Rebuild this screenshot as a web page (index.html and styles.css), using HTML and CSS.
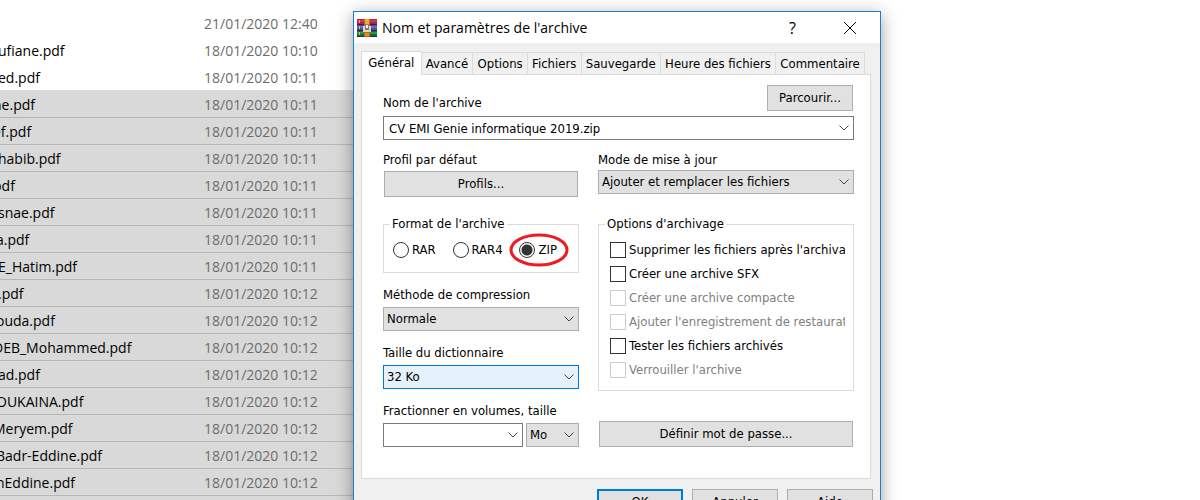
FILE: index.html
```html
<!DOCTYPE html>
<html lang="fr">
<head>
<meta charset="utf-8">
<title>Nom et paramètres de l'archive</title>
<link rel="stylesheet" href="styles.css">
</head>
<body>
<main class="desktop">
  <table class="files">
    <tbody>
      <tr><td class="name"></td><td class="date">21/01/2020 12:40</td></tr>
      <tr><td class="name">ufiane.pdf</td><td class="date">18/01/2020 10:10</td></tr>
      <tr><td class="name">ed.pdf</td><td class="date">18/01/2020 10:11</td></tr>
      <tr class="selected"><td class="name cut-more">ne.pdf</td><td class="date">18/01/2020 10:11</td></tr>
      <tr class="selected"><td class="name cut-more">ef.pdf</td><td class="date">18/01/2020 10:11</td></tr>
      <tr class="selected"><td class="name">habib.pdf</td><td class="date">18/01/2020 10:11</td></tr>
      <tr class="selected"><td class="name cut-more">pdf</td><td class="date">18/01/2020 10:11</td></tr>
      <tr class="selected"><td class="name">snae.pdf</td><td class="date">18/01/2020 10:11</td></tr>
      <tr class="selected"><td class="name cut">a.pdf</td><td class="date">18/01/2020 10:11</td></tr>
      <tr class="selected"><td class="name">E_Hatim.pdf</td><td class="date">18/01/2020 10:11</td></tr>
      <tr class="selected"><td class="name">.pdf</td><td class="date">18/01/2020 10:12</td></tr>
      <tr class="selected"><td class="name cut">ouda.pdf</td><td class="date">18/01/2020 10:12</td></tr>
      <tr class="selected"><td class="name cut-more">DEB_Mohammed.pdf</td><td class="date">18/01/2020 10:12</td></tr>
      <tr class="selected"><td class="name">ad.pdf</td><td class="date">18/01/2020 10:12</td></tr>
      <tr class="selected"><td class="name cut">OUKAINA.pdf</td><td class="date">18/01/2020 10:12</td></tr>
      <tr class="selected"><td class="name cut-more">Meryem.pdf</td><td class="date">18/01/2020 10:12</td></tr>
      <tr class="selected"><td class="name cut">Badr-Eddine.pdf</td><td class="date">18/01/2020 10:12</td></tr>
      <tr class="selected"><td class="name cut">nEddine.pdf</td><td class="date">18/01/2020 10:12</td></tr>
      <tr class="selected"><td class="name"></td><td class="date"></td></tr>
    </tbody>
  </table>

  <section class="dialog" role="dialog" aria-labelledby="dialog-title">
    <header class="titlebar">
      <svg class="app-icon" width="20" height="18" viewBox="0 0 20 18" aria-hidden="true">
        <rect width="20" height="6" fill="#a8244c"/><rect y="1" width="20" height="2" fill="#d8305c"/>
        <rect y="6" width="20" height="6" fill="#4a4aa8"/><rect y="7" width="20" height="2" fill="#6868d0"/>
        <rect y="12" width="20" height="6" fill="#146c34"/><rect y="13" width="20" height="2" fill="#209c50"/>
        <path d="M0 5.5h20M0 11.5h20M0 17.5h20" stroke="#382430"/>
        <path d="M2.500 1v3M2.500 7v3M2.500 13v3" stroke="#f0c030"/>
        <rect x="7" width="6" height="18" fill="#b86818"/><rect x="8" width="4" height="5" fill="#f0a838"/>
        <path d="M6 7h2v4h4V7h2v6H6z" fill="#d8d8d8"/><rect x="8" y="5" width="4" height="5" fill="#a07850"/>
        <rect x="9" y="6" width="2" height="3" fill="#fff"/><rect x="8" y="14" width="4" height="3" fill="#e09020"/>
      </svg>
      <h1 class="title" id="dialog-title">Nom et paramètres de l'archive</h1>
      <button class="caption-button" type="button" aria-label="Aide contextuelle">?</button>
      <button class="caption-button close" type="button" aria-label="Fermer">
        <svg width="14" height="14" viewBox="0 0 14 14"><path d="M1 1l12 12M13 1L1 13" stroke="#000"/></svg>
      </button>
    </header>

    <nav class="tabs" role="tablist">
      <button class="tab active" type="button" role="tab" aria-selected="true">Général</button>
      <button class="tab" type="button" role="tab">Avancé</button>
      <button class="tab" type="button" role="tab">Options</button>
      <button class="tab" type="button" role="tab">Fichiers</button>
      <button class="tab" type="button" role="tab">Sauvegarde</button>
      <button class="tab" type="button" role="tab">Heure des fichiers</button>
      <button class="tab" type="button" role="tab">Commentaire</button>
    </nav>

    <form class="panel">
      <div class="name-row">
        <label for="archive">Nom de l'archive</label>
        <button class="button browse" type="button">Parcourir...</button>
      </div>
      <div class="combo">
        <input class="combo-input" id="archive" type="text" value="CV EMI Genie informatique 2019.zip">
        <svg class="chevron" width="10" height="6" viewBox="0 0 10 6"><path d="M.5.5L5 5 9.500.5"/></svg>
      </div>

      <div class="columns">
        <div class="column">
          <div class="field">
            <label for="profiles">Profil par défaut</label>
            <button class="button inset" id="profiles" type="button">Profils...</button>
          </div>
          <fieldset class="group formats">
            <legend>Format de l'archive</legend>
            <div class="radios">
              <label class="option"><input class="radio" type="radio" name="format">RAR</label>
              <label class="option"><input class="radio" type="radio" name="format">RAR4</label>
              <label class="option marked"><input class="radio" type="radio" name="format" checked>ZIP
                <svg class="mark" width="60" height="34" viewBox="0 0 60 34" aria-hidden="true"><ellipse cx="30" cy="17" rx="28" ry="15"/></svg>
              </label>
            </div>
          </fieldset>
          <div class="field stacked">
            <label for="method">Méthode de compression</label>
            <div class="combo"><select class="select" id="method"><option>Normale</option></select><svg class="chevron" width="10" height="6" viewBox="0 0 10 6"><path d="M.5.5L5 5 9.500.5"/></svg></div>
          </div>
          <div class="field stacked">
            <label for="dictionary">Taille du dictionnaire</label>
            <div class="combo"><select class="select focused" id="dictionary"><option>32 Ko</option></select><svg class="chevron" width="10" height="6" viewBox="0 0 10 6"><path d="M.5.5L5 5 9.500.5"/></svg></div>
          </div>
          <div class="field stacked">
            <label for="volume">Fractionner en volumes, taille</label>
            <div class="volume">
              <div class="combo size"><input class="combo-input" id="volume" type="text"><svg class="chevron" width="10" height="6" viewBox="0 0 10 6"><path d="M.5.5L5 5 9.500.5"/></svg></div>
              <div class="combo unit"><select class="select" aria-label="Unité"><option>Mo</option></select><svg class="chevron" width="10" height="6" viewBox="0 0 10 6"><path d="M.5.5L5 5 9.500.5"/></svg></div>
            </div>
          </div>
        </div>

        <div class="column">
          <div class="field update">
            <label for="update">Mode de mise à jour</label>
            <div class="combo"><select class="select" id="update"><option>Ajouter et remplacer les fichiers</option></select><svg class="chevron" width="10" height="6" viewBox="0 0 10 6"><path d="M.5.5L5 5 9.500.5"/></svg></div>
          </div>
          <fieldset class="group options">
            <legend>Options d'archivage</legend>
            <div class="checks">
              <label class="option"><input class="check" type="checkbox">Supprimer les fichiers après l'archivage</label>
              <label class="option"><input class="check" type="checkbox">Créer une archive SFX</label>
              <label class="option off"><input class="check" type="checkbox" disabled>Créer une archive compacte</label>
              <label class="option off"><input class="check" type="checkbox" disabled>Ajouter l'enregistrement de restauration</label>
              <label class="option"><input class="check" type="checkbox">Tester les fichiers archivés</label>
              <label class="option off"><input class="check" type="checkbox" disabled>Verrouiller l'archive</label>
            </div>
          </fieldset>
          <button class="button inset password" type="button">Définir mot de passe...</button>
        </div>
      </div>
    </form>

    <footer class="actions">
      <button class="button default" type="button">OK</button>
      <button class="button" type="button">Annuler</button>
      <button class="button" type="button">Aide</button>
    </footer>
  </section>
</main>
</body>
</html>
```
FILE: styles.css
```css
* {
  box-sizing: border-box;
}

body {
  margin: 0;
  background: #fff;
  color: #000;
  font: 13px/16px "DejaVu Sans Condensed", "DejaVu Sans", sans-serif;
  font-stretch: condensed;
}

button, input, select {
  margin: 0;
  font: inherit;
  color: inherit;
}

.desktop {
  position: relative;
  height: 100vh;
  overflow: hidden;
}

/* File list behind the dialog */
.files {
  width: 400px;
  margin-top: 9px;
  border-collapse: collapse;
  table-layout: fixed;
  font: 14px/20px "Open Sans", "Noto Sans", sans-serif;
}

.files tr {
  height: 27px;
}

.files td {
  padding: 2px 0 0;
  white-space: nowrap;
}

.files .name {
  width: 204px;
  text-indent: -2px;
}

.files .cut {
  text-indent: -4px;
}

.files .cut-more {
  text-indent: -7px;
}

.files .date {
  color: #6d6d6d;
}

.files .selected {
  background: #d9d9d9;
}

.selected + .selected td {
  box-shadow: inset 0 1px #b8b8b8;
}

/* Dialog window */
.dialog {
  position: absolute;
  top: 11px;
  left: 353px;
  width: 528px;
  border: 1px solid #1a7fd0;
  background: #f0f0f0;
  box-shadow: 0 4px 16px rgba(0, 0, 0, .4);
}

.titlebar {
  display: flex;
  align-items: center;
  height: 31px;
  padding-left: 3px;
  background: #fff;
}

.title {
  flex: 1;
  margin: 0 0 0 5px;
  font: 14px/20px "Open Sans", "Noto Sans", sans-serif;
}

.caption-button {
  display: flex;
  align-items: center;
  justify-content: center;
  width: 57px;
  height: 30px;
  padding: 0;
  border: 0;
  background: none;
  font: 16px/20px "Open Sans", "Noto Sans", sans-serif;
}

.close {
  margin-right: 2px;
}

/* Tabs */
.tabs {
  display: flex;
  align-items: flex-end;
  margin: 8px 15px 0 7px;
}

.tab {
  flex: 1 0 auto;
  height: 22px;
  padding: 0 3px;
  border: 1px solid #dcdcdc;
  border-width: 1px 1px 0 0;
  background: #f0f0f0;
  text-align: center;
}

.tab.active {
  z-index: 1;
  height: 24px;
  margin-bottom: -1px;
  padding: 0 5px 2px;
  border-left-width: 1px;
  background: #fff;
}

.panel {
  margin: 0 9px 0 7px;
  padding: 10px 16px 31px 21px;
  border: 1px solid #dcdcdc;
  background: #fff;
}

.name-row {
  display: flex;
  align-items: flex-end;
  justify-content: space-between;
  margin-bottom: 5px;
}

.button {
  height: 26px;
  padding: 0;
  border: 1px solid #adadad;
  background: #e1e1e1;
  text-align: center;
}

.browse {
  width: 86px;
  margin-right: 1px;
}

.inset {
  margin: 0 1px;
}

/* Drop-downs and text boxes */
.combo {
  position: relative;
}

.combo-input,
.select {
  display: block;
  width: 100%;
  height: 24px;
  padding: 0 20px 0 5px;
  border: 1px solid #7a7a7a;
  border-radius: 0;
  outline: 0;
  background: #fff;
}

.select {
  appearance: none;
  padding-left: 3px;
  border-color: #adadad;
  background: #e1e1e1;
}

.select.focused {
  border-color: #0078d7;
  background: #e5f1fb;
}

.chevron {
  position: absolute;
  top: 9px;
  right: 5px;
  fill: none;
  stroke: #444;
  pointer-events: none;
}

/* Two-column form */
.columns {
  display: grid;
  grid-template-columns: 196fr 256fr;
  gap: 19px;
  margin-top: 12px;
}

.column {
  display: flex;
  flex-direction: column;
  min-width: 0;
}

.field {
  display: flex;
  flex-direction: column;
  gap: 3px;
}

.update {
  gap: 2px;
}

.stacked {
  gap: 4px;
  margin-top: 14px;
}

.group {
  min-width: 0;
  margin: 19px 0 0;
  border: 1px solid #dcdcdc;
}

.group legend {
  padding: 0 2px;
  white-space: nowrap;
}

.formats {
  padding: 10px 9px 14px;
}

.formats legend {
  margin-left: -3px;
}

.radios {
  display: flex;
  justify-content: space-between;
  padding-right: 12px;
}

.option {
  display: flex;
  align-items: center;
  gap: 3px;
  height: 16px;
  white-space: nowrap;
}

.off {
  color: #808080;
}

.radio,
.check {
  flex: none;
  appearance: none;
  width: 16px;
  height: 16px;
  border: 1px solid #333;
  background: #fff;
}

.radio {
  border-radius: 50%;
}

.radio:checked {
  background: radial-gradient(circle, #333 5px, #fff 6px);
}

.check:disabled {
  border-color: #ccc;
}

.marked {
  position: relative;
}

.mark {
  position: absolute;
  top: -9px;
  left: -10px;
  fill: none;
  stroke: #ed1c24;
  stroke-width: 3;
}

.options {
  margin-top: 22px;
  padding: 10px 8px 12px 11px;
}

.options legend {
  margin-left: -5px;
}

.checks {
  display: flex;
  flex-direction: column;
  gap: 8px;
  overflow: hidden;
}

.volume {
  display: flex;
  gap: 3px;
}

.size {
  flex: 1;
}

.unit {
  width: 53px;
}

.password {
  margin-top: 30px;
}

.actions {
  display: flex;
  justify-content: flex-end;
  gap: 9px;
  padding: 10px 7px 12px;
}

.actions .button {
  width: 86px;
}

.actions .default {
  border: 2px solid #0078d7;
}
```
